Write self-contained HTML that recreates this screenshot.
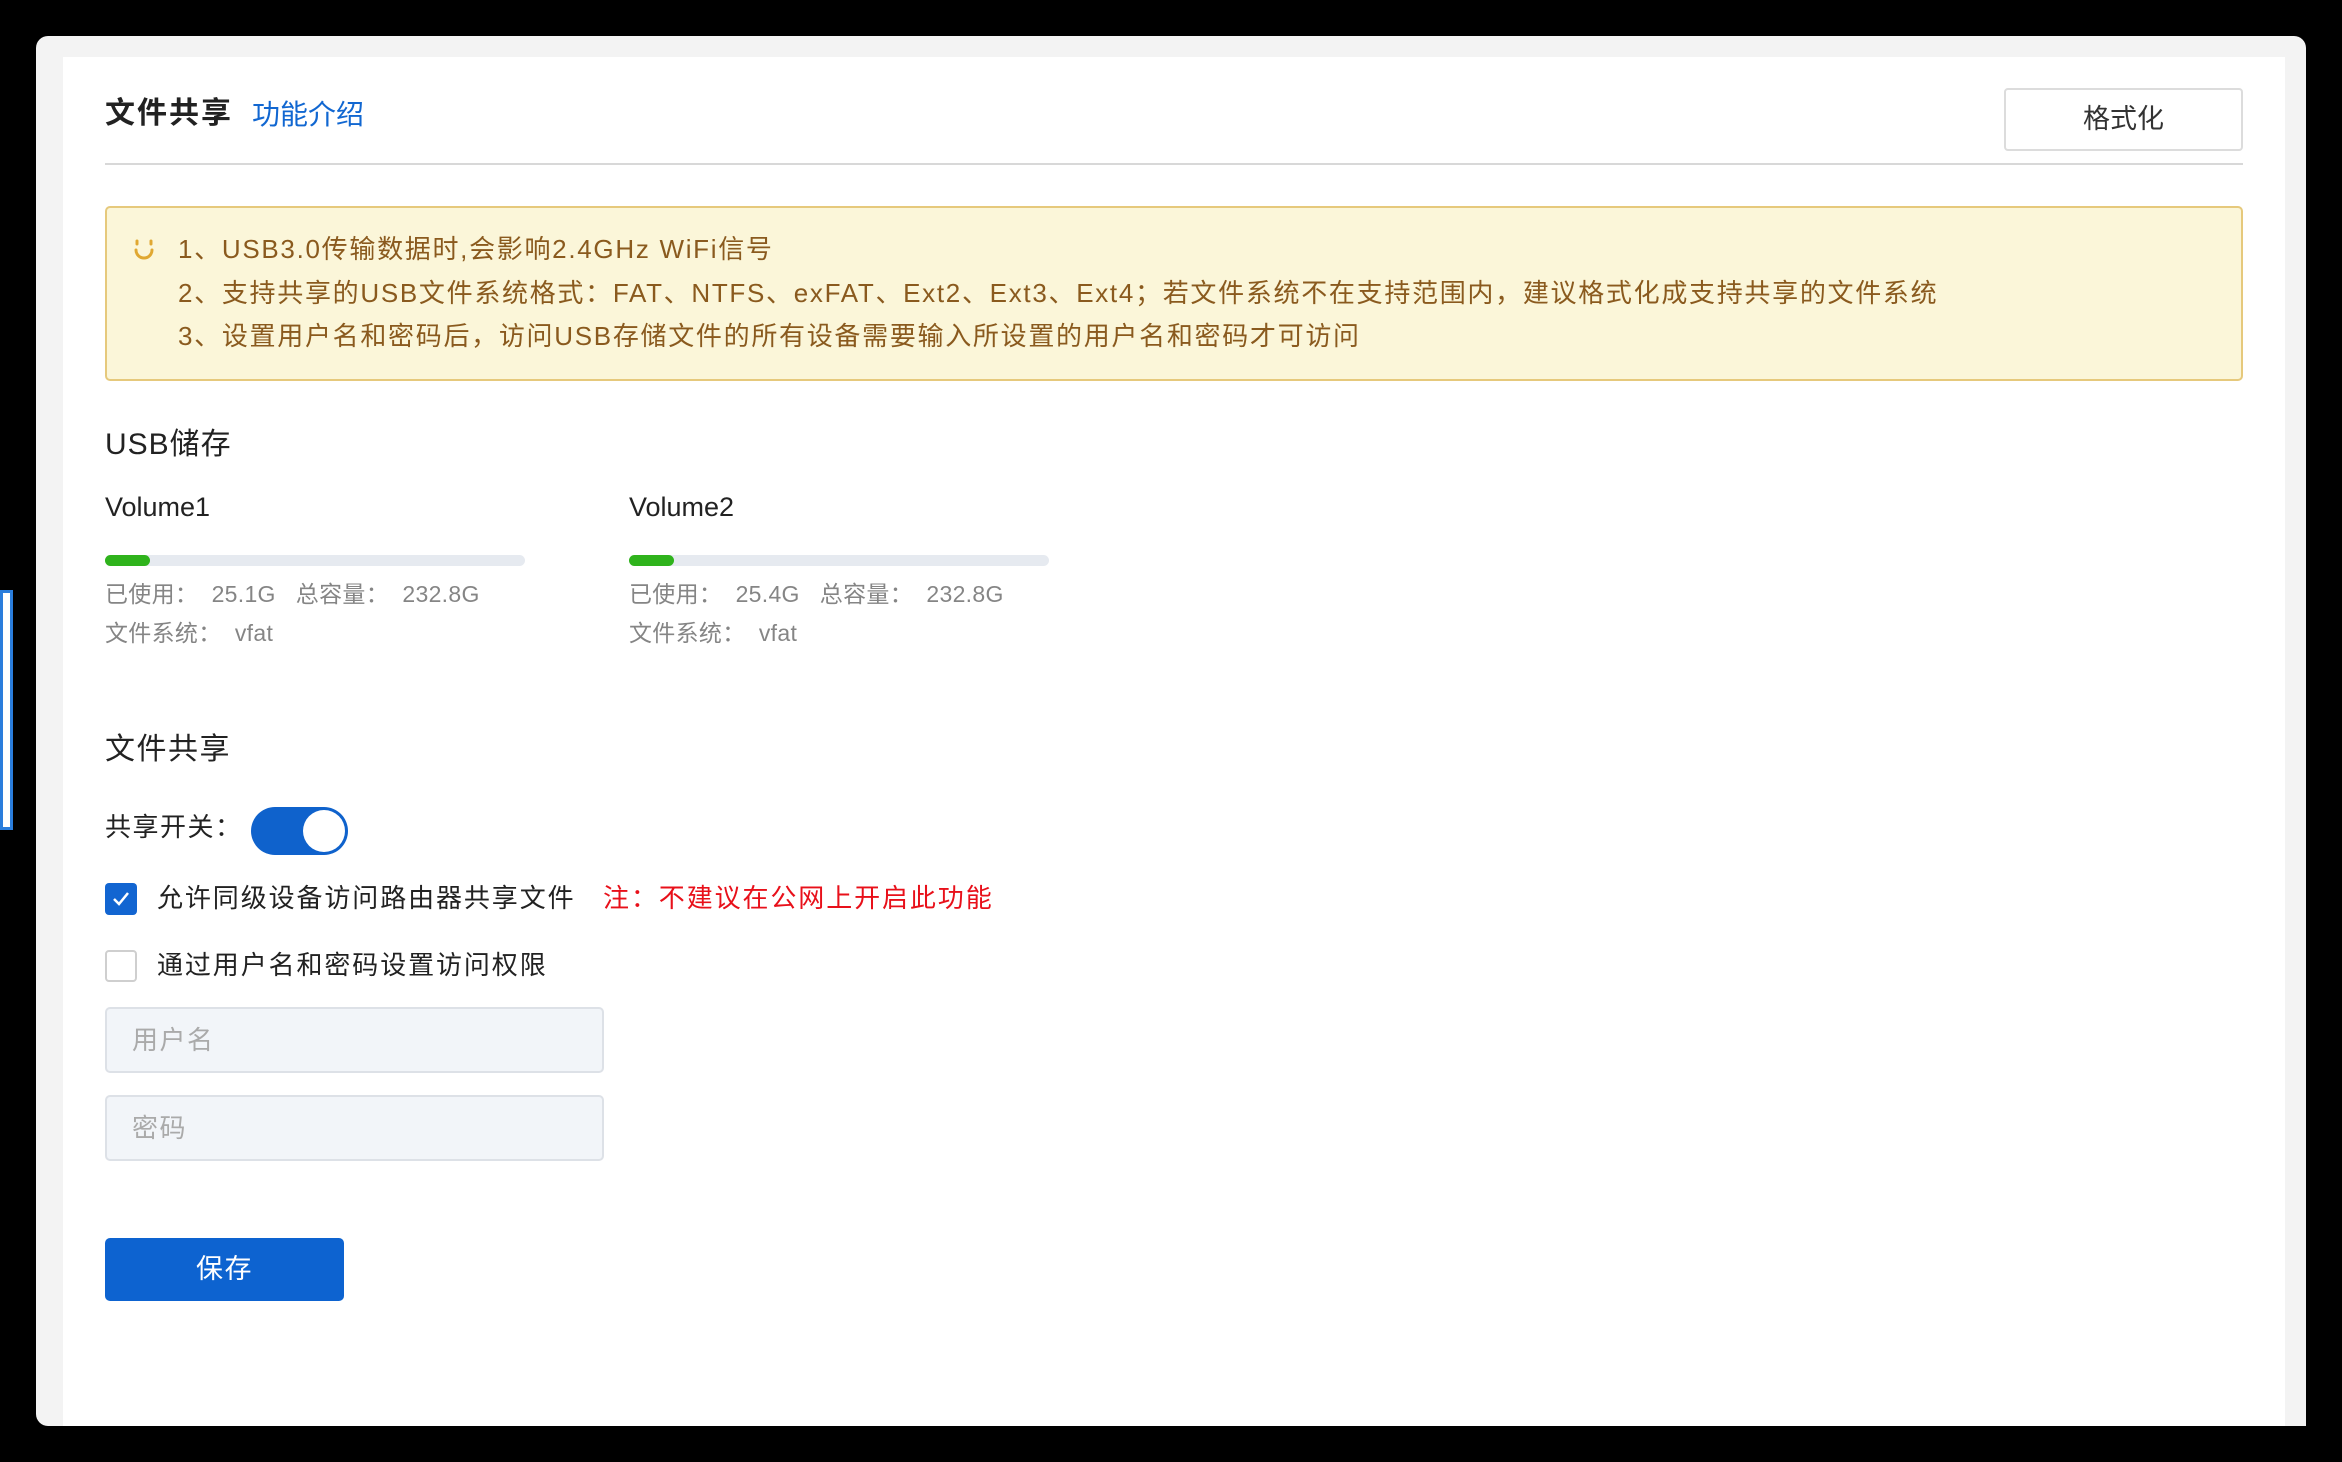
<!DOCTYPE html>
<html><head><meta charset="utf-8"><style>
*{box-sizing:border-box;margin:0;padding:0}
body{width:2342px;height:1462px;background:#000;position:relative;overflow:hidden;font-family:"Liberation Sans","Noto Sans CJK SC",sans-serif;color:#222}
.abs{position:absolute;white-space:nowrap}
#outer{left:36px;top:36px;width:2270px;height:1390px;background:#f3f3f3;border-radius:12px 12px 0 12px}
#card{left:63px;top:57px;width:2222px;height:1369px;background:#fff}
.t{line-height:1}
.warn{color:#8a5a1e;font-size:26px;letter-spacing:1.7px}
.gray{color:#858585;font-size:23px;letter-spacing:0.3px}
.bar{height:11px;width:420px;background:#e6eaf0;border-radius:6px}
.bar i{display:block;height:11px;width:45px;background:#2fb31c;border-radius:6px}
.inp{width:499px;height:66px;background:#f2f5f9;border:2px solid #dde1e7;border-radius:5px;color:#aaa;font-size:26px;padding:11px 0 0 25px;letter-spacing:1.5px}
</style></head><body>
<div class="abs" style="left:0;top:590px;width:13px;height:240px;border:3px solid #2a7ddc;background:#fff"></div>
<div class="abs" id="outer"></div>
<div class="abs" id="card"></div>
<div class="abs t" style="left:105px;top:99px;font-size:30px;font-weight:bold;color:#222;letter-spacing:2px">文件共享</div>
<div class="abs t" style="left:252px;top:101px;font-size:28px;color:#1167d1">功能介绍</div>
<div class="abs" style="left:2004px;top:88px;width:239px;height:63px;border:2px solid #dcdcdc;border-radius:4px;font-size:27px;text-align:center;line-height:59px;color:#333">格式化</div>
<div class="abs" style="left:105px;top:163px;width:2138px;height:2px;background:#d8d8d8"></div>
<div class="abs" style="left:105px;top:206px;width:2138px;height:175px;background:#fbf6d9;border:2px solid #e6c97c;border-radius:5px"></div>
<svg class="abs" style="left:133px;top:238px" width="22" height="24" viewBox="0 0 22 24"><path d="M4 3v3M18 3v3M3 12a8 8 0 0 0 16 0" stroke="#e0a832" stroke-width="3" fill="none" stroke-linecap="round"/></svg>
<div class="abs t warn" style="left:178px;top:236px">1、USB3.0传输数据时,会影响2.4GHz WiFi信号</div>
<div class="abs t warn" style="left:178px;top:280px">2、支持共享的USB文件系统格式：FAT、NTFS、exFAT、Ext2、Ext3、Ext4；若文件系统不在支持范围内，建议格式化成支持共享的文件系统</div>
<div class="abs t warn" style="left:178px;top:323px">3、设置用户名和密码后，访问USB存储文件的所有设备需要输入所设置的用户名和密码才可访问</div>
<div class="abs t" style="left:105px;top:430px;font-size:30px;letter-spacing:1px">USB储存</div>
<div class="abs t" style="left:105px;top:494px;font-size:27px">Volume1</div>
<div class="abs t" style="left:629px;top:494px;font-size:27px">Volume2</div>
<div class="abs bar" style="left:105px;top:555px"><i></i></div>
<div class="abs bar" style="left:629px;top:555px"><i></i></div>
<div class="abs t gray" style="left:105px;top:583px">已使用：&nbsp; 25.1G &nbsp; 总容量：&nbsp; 232.8G</div>
<div class="abs t gray" style="left:629px;top:583px">已使用：&nbsp; 25.4G &nbsp; 总容量：&nbsp; 232.8G</div>
<div class="abs t gray" style="left:105px;top:622px">文件系统：&nbsp; vfat</div>
<div class="abs t gray" style="left:629px;top:622px">文件系统：&nbsp; vfat</div>
<div class="abs t" style="left:105px;top:735px;font-size:30px;letter-spacing:1.5px">文件共享</div>
<div class="abs t" style="left:105px;top:814px;font-size:26px;letter-spacing:1.5px">共享开关：</div>
<div class="abs" style="left:251px;top:807px;width:97px;height:48px;background:#0f62cc;border-radius:24px"><div style="position:absolute;right:3px;top:3px;width:42px;height:42px;border-radius:50%;background:#fff"></div></div>
<div class="abs" style="left:105px;top:883px;width:32px;height:32px;background:#1265d1;border-radius:4px"><svg width="32" height="32"><path d="M9 16l5 5 9-11" stroke="#fff" stroke-width="2.5" fill="none"/></svg></div>
<div class="abs t" style="left:157px;top:885px;font-size:26px;letter-spacing:1.9px">允许同级设备访问路由器共享文件</div>
<div class="abs t" style="left:603px;top:885px;font-size:26px;color:#e8101a;letter-spacing:1.9px">注：不建议在公网上开启此功能</div>
<div class="abs" style="left:105px;top:950px;width:32px;height:32px;border:2px solid #cfcfcf;border-radius:4px;background:#fff"></div>
<div class="abs t" style="left:157px;top:952px;font-size:26px;letter-spacing:1.9px">通过用户名和密码设置访问权限</div>
<div class="abs inp" style="left:105px;top:1007px">用户名</div>
<div class="abs inp" style="left:105px;top:1095px">密码</div>
<div class="abs" style="left:105px;top:1238px;width:239px;height:63px;background:#0d63d0;border-radius:5px;color:#fff;font-size:27px;text-align:center;line-height:63px;letter-spacing:1.5px">保存</div>
</body></html>
